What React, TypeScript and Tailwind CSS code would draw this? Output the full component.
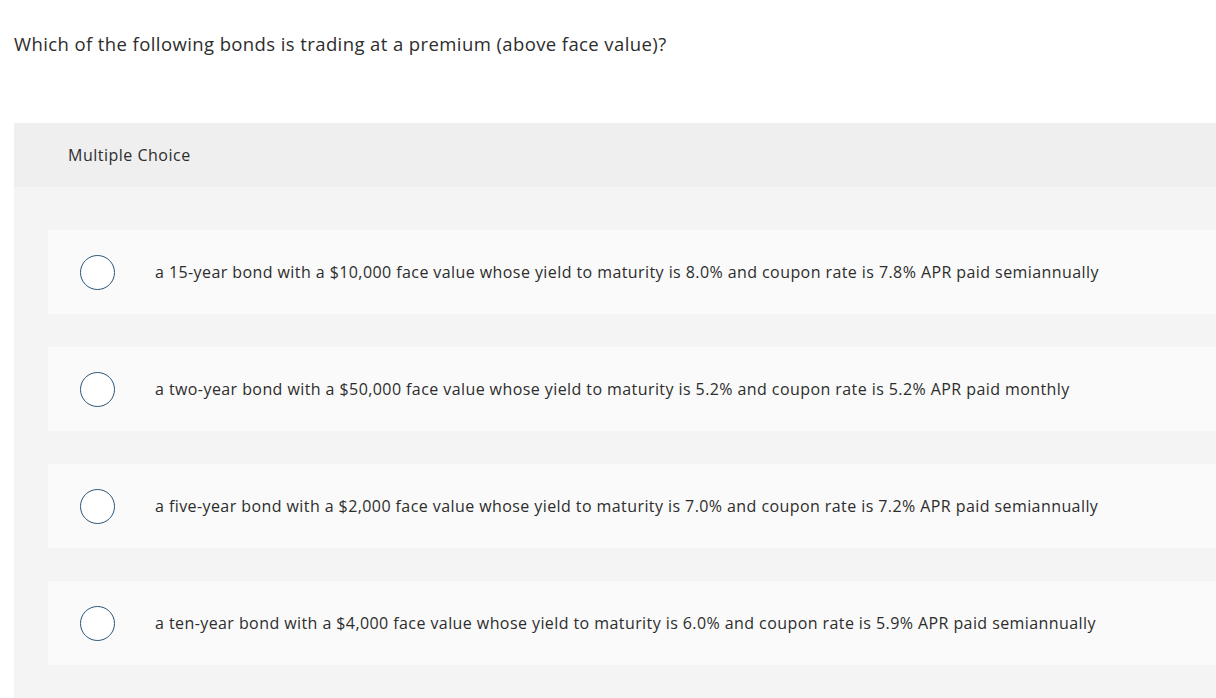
import React, { useState } from 'react';

const options = [
  'a 15-year bond with a $10,000 face value whose yield to maturity is 8.0% and coupon rate is 7.8% APR paid semiannually',
  'a two-year bond with a $50,000 face value whose yield to maturity is 5.2% and coupon rate is 5.2% APR paid monthly',
  'a five-year bond with a $2,000 face value whose yield to maturity is 7.0% and coupon rate is 7.2% APR paid semiannually',
  'a ten-year bond with a $4,000 face value whose yield to maturity is 6.0% and coupon rate is 5.9% APR paid semiannually',
];

export default function App() {
  const [selected, setSelected] = useState<number | null>(null);

  return (
    <div
      className="w-[1216px] h-[698px] bg-white overflow-hidden text-[#2d2d2d]"
      style={{ fontFamily: '"Open Sans", Lato, sans-serif' }}
    >
      <p className="pl-[14px] pt-[31px] text-[18.5px] leading-[26px] tracking-[0.4px]">
        Which of the following bonds is trading at a premium (above face value)?
      </p>

      <div className="ml-[14px] mt-[66px] bg-[#f4f4f4]">
        <div className="h-[64px] bg-[#efefef] flex items-center pl-[54px] text-[16px] tracking-[0.5px]">
          Multiple Choice
        </div>
        <div className="pl-[34px] pt-[43px] pb-[34px] flex flex-col gap-[33px]">
          {options.map((text, i) => (
            <label
              key={i}
              onClick={() => setSelected(i)}
              className="h-[84px] bg-[#fafafa] flex items-center pl-[32px] cursor-pointer"
            >
              <span className="w-[35px] h-[35px] rounded-full border-[1.5px] border-[#2a5677] bg-white shrink-0 flex items-center justify-center">
                {selected === i && <span className="w-[17px] h-[17px] rounded-full bg-[#2a5677]" />}
              </span>
              <span className="ml-[40px] text-[16px] tracking-[0.42px]">{text}</span>
            </label>
          ))}
        </div>
      </div>
    </div>
  );
}
